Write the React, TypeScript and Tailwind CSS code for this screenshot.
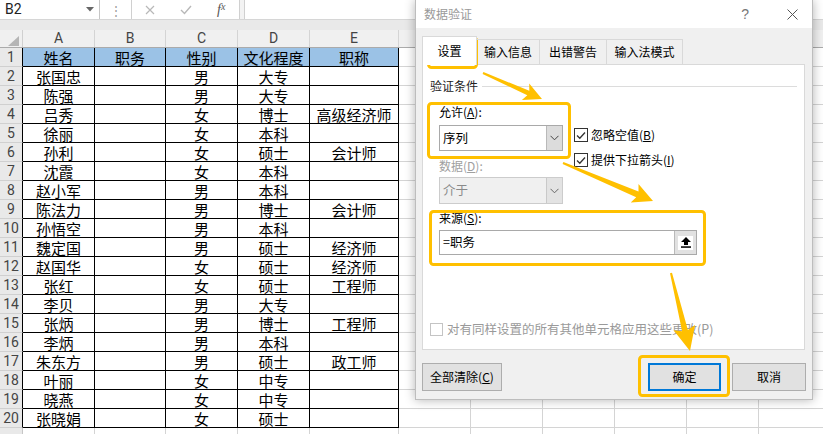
import React from "react";

const colW = [
  "w-[23px]",
  "w-[72px]",
  "w-[71px]",
  "w-[72px]",
  "w-[72px]",
  "w-[89px]",
  "w-[72px]",
  "w-[72px]",
  "w-[72px]",
  "w-[72px]",
  "w-[72px]",
  "w-[72px]",
];
const letters = ["A", "B", "C", "D", "E", "F", "G", "H", "I", "J", "K"];

const data: string[][] = [
  ["姓名", "职务", "性别", "文化程度", "职称"],
  ["张国忠", "", "男", "大专", ""],
  ["陈强", "", "男", "大专", ""],
  ["吕秀", "", "女", "博士", "高级经济师"],
  ["徐丽", "", "女", "本科", ""],
  ["孙利", "", "女", "硕士", "会计师"],
  ["沈霞", "", "女", "本科", ""],
  ["赵小军", "", "男", "本科", ""],
  ["陈法力", "", "男", "博士", "会计师"],
  ["孙悟空", "", "男", "本科", ""],
  ["魏定国", "", "男", "硕士", "经济师"],
  ["赵国华", "", "女", "硕士", "经济师"],
  ["张红", "", "女", "硕士", "工程师"],
  ["李贝", "", "男", "大专", ""],
  ["张炳", "", "男", "博士", "工程师"],
  ["李炳", "", "男", "本科", ""],
  ["朱东方", "", "男", "硕士", "政工师"],
  ["叶丽", "", "女", "中专", ""],
  ["晓燕", "", "女", "中专", ""],
  ["张晓娟", "", "女", "硕士", ""],
  ["", "", "", "", ""],
];

function arrowPoints(x1: number, y1: number, x2: number, y2: number, headLen = 20, headW = 10, tailW = 1, neckW = 3) {
  const dx = x2 - x1;
  const dy = y2 - y1;
  const L = Math.sqrt(dx * dx + dy * dy);
  const ux = dx / L;
  const uy = dy / L;
  const nx = -uy;
  const ny = ux;
  const bx = x2 - ux * headLen;
  const by = y2 - uy * headLen;
  const pts = [
    [x1 + nx * tailW, y1 + ny * tailW],
    [bx + ux * 3 + nx * neckW, by + uy * 3 + ny * neckW],
    [bx + nx * headW, by + ny * headW],
    [x2, y2],
    [bx - nx * headW, by - ny * headW],
    [bx + ux * 3 - nx * neckW, by + uy * 3 - ny * neckW],
    [x1 - nx * tailW, y1 - ny * tailW],
  ];
  return pts.map((p) => `${p[0].toFixed(1)},${p[1].toFixed(1)}`).join(" ");
}

function Chevron({ color = "#444" }: { color?: string }) {
  return (
    <svg width="9" height="6" viewBox="0 0 9 6">
      <polyline points="0.5,0.8 4.5,4.8 8.5,0.8" fill="none" stroke={color} strokeWidth="1" />
    </svg>
  );
}

function CheckBox({ checked, disabled }: { checked?: boolean; disabled?: boolean }) {
  return (
    <div
      className={
        disabled
          ? "w-[13px] h-[13px] border border-[#c4c4c4] bg-white shrink-0"
          : "w-[14px] h-[14px] border border-[#333333] bg-white flex items-center justify-center shrink-0"
      }
    >
      {checked && (
        <svg width="10" height="9" viewBox="0 0 10 9">
          <polyline points="1,4.5 3.8,7.3 9,1.5" fill="none" stroke="#333" strokeWidth="1.3" />
        </svg>
      )}
    </div>
  );
}

function Sheet() {
  return (
    <div className="flex flex-col font-['Noto_Sans_CJK_SC',sans-serif]">
      {/* formula bar */}
      <div className="flex h-[20px] bg-white border-b border-[#d6d6d6]">
        <div className="w-[100px] flex items-center justify-between pl-[5px] pr-[5px] border-r border-[#c6c6c6] font-['Roboto',sans-serif] text-[14px] text-[#222]">
          <span>B2</span>
          <svg width="8" height="5" viewBox="0 0 8 5">
            <polygon points="0,0 8,0 4,4.5" fill="#666" />
          </svg>
        </div>
        <div className="w-[31px] flex items-center justify-center text-[#9a9a9a] text-[12px]">⋮</div>
        <div className="w-[109px] flex items-center border-l border-r border-[#d0d0d0] text-[#b0b0b0]">
          <span className="w-[36px] flex justify-center">
            <svg width="10" height="10" viewBox="0 0 10 10">
              <path d="M1 1 L9 9 M9 1 L1 9" stroke="#b8b8b8" strokeWidth="1.2" />
            </svg>
          </span>
          <span className="w-[36px] flex justify-center">
            <svg width="12" height="10" viewBox="0 0 12 10">
              <polyline points="1,5 4.5,8.5 11,1" fill="none" stroke="#b8b8b8" strokeWidth="1.4" />
            </svg>
          </span>
          <span className="w-[36px] flex justify-center font-['Liberation_Serif',serif] italic text-[14px] text-[#555]">
            f<span className="text-[10px]">x</span>
          </span>
        </div>
        <div className="w-[4px] bg-[#f3f3f3]" />
        <div className="flex-1 border-l border-[#d0d0d0] bg-white" />
      </div>
      <div className="h-[10px] bg-[#e9e9e9]" />
      {/* column headers */}
      <div className="flex h-[18px] bg-[#f0f0f0] border-b border-[#ababab]">
        <div className={`${colW[0]} shrink-0 border-r border-[#d0d0d0] relative flex items-end justify-end pb-[1px] pr-[3px]`}>
          <svg width="11" height="10" viewBox="0 0 11 10">
            <polygon points="11,0 11,10 0,10" fill="#b5b5b5" />
          </svg>
        </div>
        {letters.map((l, i) => (
          <div
            key={l}
            className={`${colW[i + 1]} shrink-0 border-r border-[#d4d4d4] flex items-center justify-center font-['Roboto',sans-serif] text-[14px] text-[#444]`}
          >
            {l}
          </div>
        ))}
      </div>
      {/* rows */}
      {data.map((row, r) => {
        const inTable = r < 20;
        return (
          <div key={r} className="flex h-[19px]">
            <div
              className={`${colW[0]} shrink-0 bg-[#e9e9e9] border-b border-[#d0d0d0] ${
                inTable ? "border-r border-r-black" : "border-r border-r-[#c6c6c6]"
              } flex items-center justify-center font-['Roboto',sans-serif] text-[14px] text-[#444] leading-none`}
            >
              {inTable ? r + 1 : ""}
            </div>
            {letters.map((_, c) => {
              const isTable = inTable && c < 5;
              const text = c < 5 ? row[c] : "";
              return (
                <div
                  key={c}
                  className={`${colW[c + 1]} shrink-0 border-r border-b ${
                    isTable ? "border-black" : "border-[#d4d4d4]"
                  } ${isTable && r === 0 ? "bg-[#9bc2e6]" : "bg-white"} flex items-center justify-center text-[15px] text-black leading-none`}
                >
                  {text}
                </div>
              );
            })}
          </div>
        );
      })}
    </div>
  );
}

function Dialog() {
  return (
    <div className="absolute left-[415px] top-0 w-[398px] h-[400px] bg-[#f0f0f0] border border-[#bdbdbd] border-t-0 shadow-[0_0_10px_rgba(0,0,0,0.3)] flex flex-col font-['Noto_Sans_CJK_SC',sans-serif] text-[12px] text-black">
      {/* title bar */}
      <div className="h-[28px] bg-white flex items-center pl-[8px] pr-[14px] shrink-0">
        <span className="text-[12px] text-[#999999]">数据验证</span>
        <span className="flex-1" />
        <span className="text-[14px] text-[#777] font-['Liberation_Sans',sans-serif] mr-[38px]">?</span>
        <svg width="11" height="11" viewBox="0 0 11 11">
          <path d="M0.5 0.5 L10.5 10.5 M10.5 0.5 L0.5 10.5" stroke="#555" strokeWidth="1" />
        </svg>
      </div>
      <div className="flex flex-col px-[6px] pt-[8px]">
        {/* tabs */}
        <div className="flex items-end h-[28px] relative z-10">
          <div className="w-[55px] h-[29px] bg-white border border-[#d9d9d9] border-b-0 flex items-center justify-center -mb-[1px] leading-none">
            设置
          </div>
          <div className="w-[63px] h-[25px] border border-l-0 border-[#d9d9d9] border-b-0 flex items-center justify-center leading-none">输入信息</div>
          <div className="w-[67px] h-[25px] border border-l-0 border-[#d9d9d9] border-b-0 flex items-center justify-center leading-none">出错警告</div>
          <div className="w-[76px] h-[25px] border border-l-0 border-[#d9d9d9] border-b-0 flex items-center justify-center leading-none">输入法模式</div>
        </div>
        {/* panel */}
        <div className="h-[286px] w-[383px] bg-white border border-[#d9d9d9] flex flex-col">
          <div className="flex items-center mt-[13px] pl-[7px] pr-[7px] h-[16px]">
            <span className="text-[#222]">验证条件</span>
            <div className="flex-1 h-px bg-[#dcdcdc] ml-[4px]" />
          </div>
          <div className="flex items-start pl-[16px] mt-[10px]">
            <div className="w-[124px] flex flex-col">
              <div className="h-[16px] leading-[16px]">
                允许(<span className="underline">A</span>):
              </div>
              <div className="mt-[5px] flex h-[26px] border border-[#a9a9a9] bg-white">
                <div className="flex-1 flex items-center pl-[3px] text-[12.5px]">序列</div>
                <div className="w-[16px] bg-[#dcdcdc] border-l border-[#b9b9b9] flex items-center justify-center">
                  <Chevron />
                </div>
              </div>
              <div className="mt-[7px] h-[16px] leading-[16px] text-[#a0a0a0]">
                数据(<span className="underline">D</span>):
              </div>
              <div className="mt-[3px] flex h-[27px] w-[124px] border border-[#cccccc] bg-[#f0f0f0]">
                <div className="flex-1 flex items-center pl-[3px] text-[12.5px] text-[#8a8a8a]">介于</div>
                <div className="w-[16px] bg-[#e3e3e3] border-l border-[#c9c9c9] flex items-center justify-center">
                  <Chevron color="#666" />
                </div>
              </div>
            </div>
            <div className="ml-[11px] pt-[24px] flex flex-col gap-[11px]">
              <div className="flex items-center gap-[3px] h-[14px]">
                <CheckBox checked />
                <span>
                  忽略空值(<span className="underline">B</span>)
                </span>
              </div>
              <div className="flex items-center gap-[3px] h-[14px]">
                <CheckBox checked />
                <span>
                  提供下拉箭头(<span className="underline">I</span>)
                </span>
              </div>
            </div>
          </div>
          <div className="flex flex-col pl-[16px]">
            <div className="mt-[6px] h-[16px] leading-[16px]">
              来源(<span className="underline">S</span>):
            </div>
            <div className="mt-[4px] flex h-[25px] w-[258px] border border-[#a9a9a9] bg-white">
              <div className="flex-1 flex items-center pl-[3px] text-[12.5px]">=职务</div>
              <div className="w-[22px] bg-[#e1e1e1] border-l border-[#b9b9b9] flex items-center justify-center">
                <div className="w-[15px] h-[14px] bg-white flex items-center justify-center">
                  <svg width="10" height="11" viewBox="0 0 10 11">
                    <polygon points="5,0 10,5 7,5 7,8 3,8 3,5 0,5" fill="#000" />
                    <rect x="0" y="9.3" width="10" height="1.5" fill="#000" />
                  </svg>
                </div>
              </div>
            </div>
          </div>
          <div className="flex items-center gap-[4px] pl-[7px] mt-[67px]">
            <CheckBox disabled />
            <span className="text-[#9a9a9a] text-[12.5px] leading-[14px]">对有同样设置的所有其他单元格应用这些更改(P)</span>
          </div>
        </div>
        {/* buttons */}
        <div className="flex mt-[13px] h-[28px]">
          <div className="w-[80px] h-[28px] bg-[#e1e1e1] border border-[#adadad] flex items-center justify-center">
            全部清除(<span className="underline">C</span>)
          </div>
          <div className="flex-1" />
          <div className="w-[73px] h-[28px] bg-[#e1e1e1] border-2 border-[#0078d7] flex items-center justify-center">确定</div>
          <div className="w-[74px] h-[28px] ml-[11px] bg-[#e1e1e1] border border-[#adadad] flex items-center justify-center">取消</div>
        </div>
      </div>
    </div>
  );
}

function Annotations() {
  const c = "#FFC000";
  return (
    <svg className="absolute left-0 top-0 pointer-events-none" width="823" height="434" viewBox="0 0 823 434">
      <rect x="428.5" y="37.5" width="48" height="30" rx="3" fill="none" stroke={c} strokeWidth="3" />
      <rect x="428.5" y="103.5" width="141" height="54" rx="3" fill="none" stroke={c} strokeWidth="3" />
      <rect x="430.5" y="211.5" width="274" height="53" rx="3" fill="none" stroke={c} strokeWidth="3" />
      <rect x="639.5" y="356.5" width="89" height="39" rx="3" fill="none" stroke={c} strokeWidth="3" />
      <polygon points={arrowPoints(483, 73, 542, 99, 18, 9, 1, 2.5)} fill={c} />
      <polygon points={arrowPoints(563, 163, 653, 201, 20, 10, 1, 3)} fill={c} />
      <polygon points={arrowPoints(671, 273, 690, 351, 24, 11, 1, 3)} fill={c} />
    </svg>
  );
}

export default function App() {
  return (
    <div className="relative w-[823px] h-[434px] overflow-hidden bg-white">
      <Sheet />
      <Dialog />
      <Annotations />
    </div>
  );
}
